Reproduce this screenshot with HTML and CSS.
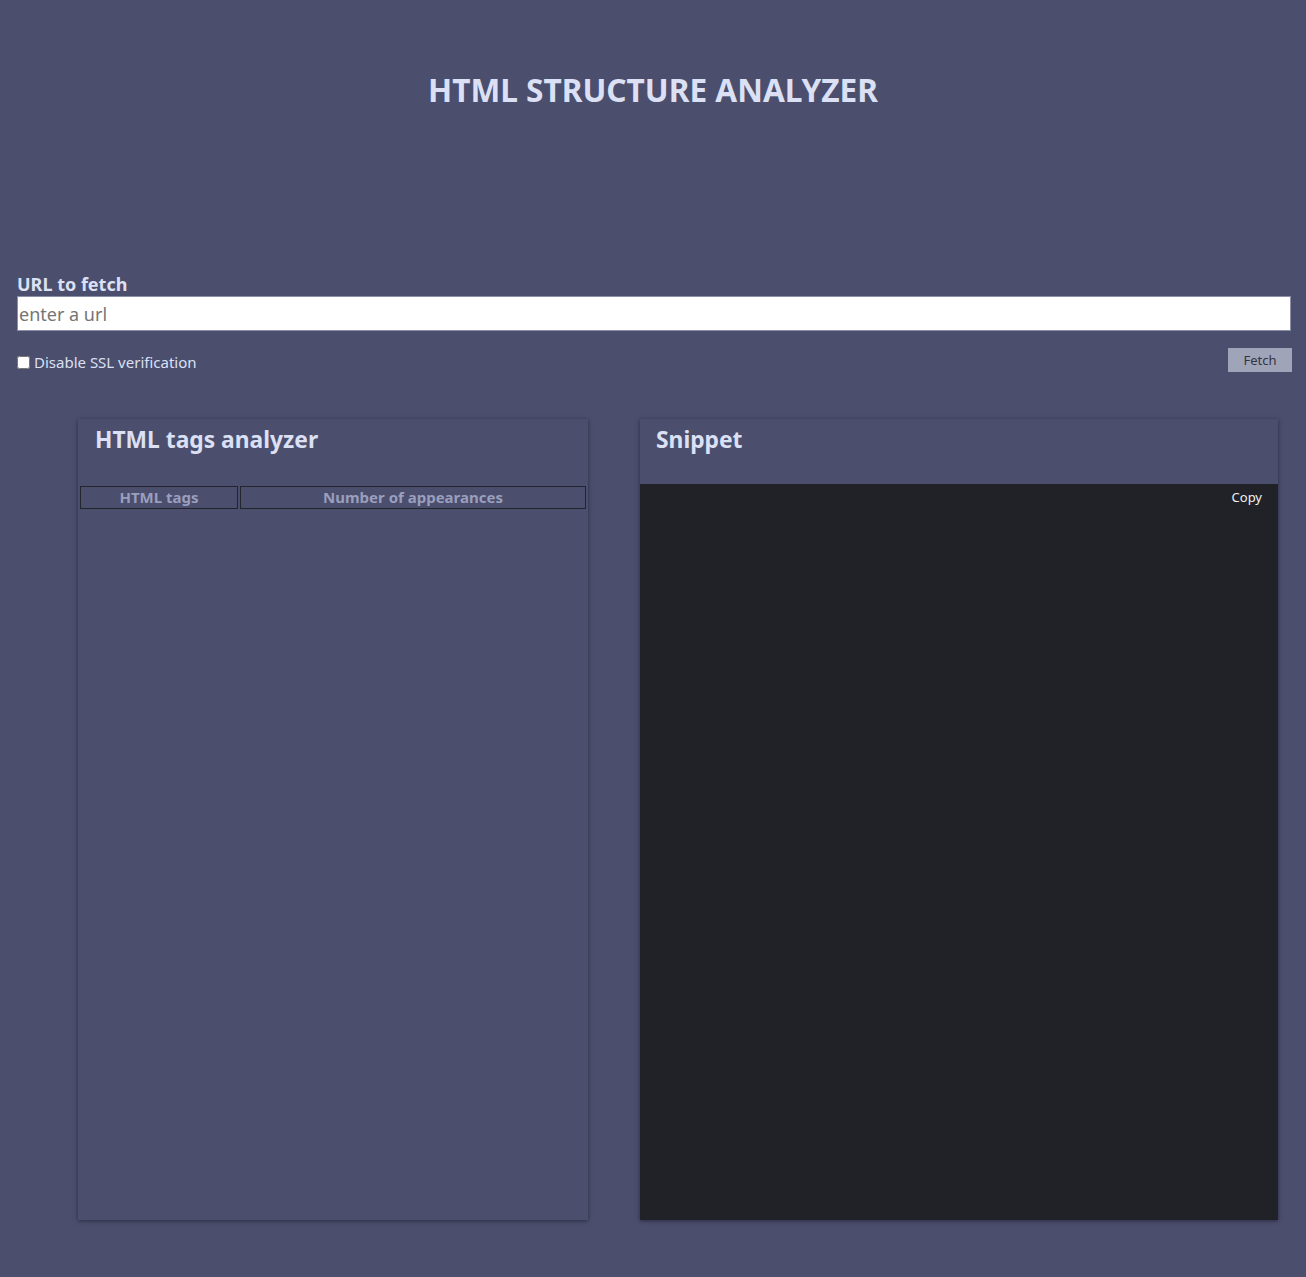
FILE: index.html
```html
<!DOCTYPE html>
<html>
<head>
<meta charset="utf-8">
<link rel="stylesheet" href="styles.css">
</head>
<body>
<h1 class="title">HTML STRUCTURE ANALYZER</h1>
<div class="form">
  <label class="url-label" for="url">URL to fetch</label>
  <input class="url-input" id="url" type="text" placeholder="enter a url">
  <div class="options">
    <label class="ssl"><input type="checkbox" class="ssl-box">Disable SSL verification</label>
    <button class="fetch">Fetch</button>
  </div>
</div>
<div class="panels">
  <section class="panel tags">
    <h2 class="panel-title">HTML tags analyzer</h2>
    <table class="tag-table">
      <thead>
        <tr><th class="col-tag">HTML tags</th><th class="col-count">Number of appearances</th></tr>
      </thead>
    </table>
  </section>
  <section class="panel snippet">
    <div class="snippet-head"><h2 class="panel-title">Snippet</h2></div>
    <div class="snippet-body"><button class="copy">Copy</button></div>
  </section>
</div>
</body>
</html>
```
FILE: styles.css
```css
html, body {
  margin: 0;
  padding: 0;
  background: #4b4e6d;
}
body {
  font-family: "Noto Sans", "Open Sans", sans-serif;
  color: #dbe0f5;
  min-height: 1277px;
}
.title {
  margin: 0;
  padding-top: 70px;
  text-align: center;
  font-size: 31.6px;
  font-weight: 700;
  color: #dbe0f5;
  line-height: 40px;
}
.form {
  padding: 162px 15px 0 17px;
}
.url-label {
  display: block;
  font-weight: 700;
  font-size: 18px;
  line-height: 24px;
  color: #dbe0f5;
}
.url-input {
  display: block;
  box-sizing: border-box;
  width: 100%;
  height: 35px;
  margin: 0;
  padding: 0 1px;
  border: 1px solid #8c8fa8;
  background: #fff;
  font-family: inherit;
  font-size: 18px;
  color: #333;
  outline: none;
}
.url-input::placeholder { color: #757575; }
.options {
  display: flex;
  justify-content: space-between;
  align-items: center;
  margin-top: 17px;
}
.ssl {
  display: flex;
  align-items: center;
  font-size: 15px;
  color: #dbe0f5;
  margin-top: 4px;
}
.ssl-box {
  margin: 0 4px 0 0;
  width: 13px;
  height: 13px;
}
.fetch {
  width: 64px;
  height: 24px;
  margin-right: -1px;
  background: #a0a4b8;
  border: none;
  color: #333545;
  font-family: inherit;
  font-size: 13px;
  padding: 0;
}
.panels {
  display: flex;
  gap: 52px;
  padding: 47px 28px 57px 78px;
}
.panel {
  box-sizing: border-box;
  height: 801px;
  box-shadow: 0 1px 4px rgba(20, 20, 35, 0.6);
}
.tags {
  width: 510px;
  background: #4b4e6d;
}
.panel-title {
  margin: 0;
  font-size: 22.8px;
  font-weight: 700;
  line-height: 38px;
  color: #dbe0f5;
}
.tags .panel-title {
  padding: 2px 0 0 17px;
  height: 65px;
}
.tag-table {
  width: 100%;
  border-spacing: 2px 0;
  border-collapse: separate;
}
.tag-table th {
  border: 1px solid #23242c;
  height: 23px;
  box-sizing: border-box;
  padding: 0;
  font-size: 15px;
  font-weight: 700;
  color: #9a9ebd;
  line-height: 21px;
}
.col-tag { width: 158px; }
.snippet {
  width: 638px;
  display: flex;
  flex-direction: column;
}
.snippet-head {
  height: 65px;
  background: #4b4e6d;
  padding: 2px 0 0 16px;
  box-sizing: border-box;
}
.snippet-body {
  flex: 1;
  background: #212227;
  display: flex;
  justify-content: flex-end;
  align-items: flex-start;
  padding: 4px 16px 0 0;
}
.copy {
  background: none;
  border: none;
  color: #f0f0f0;
  font-family: inherit;
  font-size: 13px;
  padding: 0;
}
```
